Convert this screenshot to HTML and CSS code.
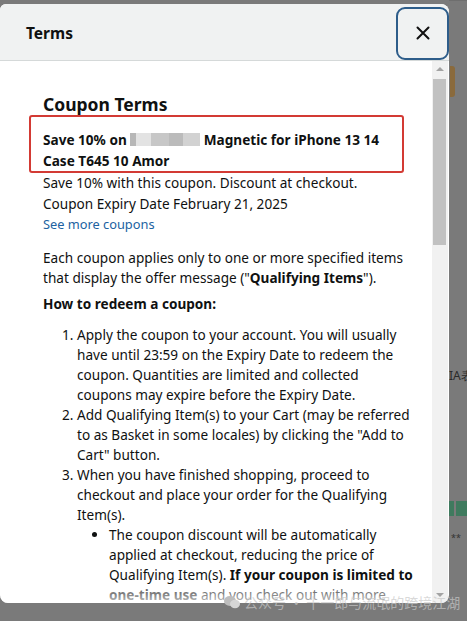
FILE: index.html
```html
<!DOCTYPE html>
<html lang="en">
<head>
    <meta charset="UTF-8">
    <meta name="viewport" content="width=device-width, initial-scale=1.0">
    <title>Terms</title>
    <link rel="stylesheet" href="styles.css">
</head>
<body>
    <div class="backdrop">
        <div class="page-bits">
            <div class="bit-orange"></div>
            <div class="bit-text">IA表</div>
            <div class="bit-stars">**</div>
            <div class="bit-green"></div>
        </div>

        <div class="modal">
            <div class="modal-header">
                <h1>Terms</h1>
                <button class="close-btn" aria-label="Close">
                    <svg width="14" height="14" viewBox="0 0 14 14">
                        <path d="M1.5 1.5 L12.5 12.5 M12.5 1.5 L1.5 12.5" stroke="#111" stroke-width="2" stroke-linecap="round"/>
                    </svg>
                </button>
            </div>

            <div class="modal-body">
                <div class="content">
                    <h2>Coupon Terms</h2>
                    <div class="highlight">
                        <p class="coupon-title">Save 10% on <span class="blur"></span> Magnetic for iPhone 13 14 Case T645 10 Amor</p>
                    </div>
                    <div class="summary">
                        <p>Save 10% with this coupon. Discount at checkout.</p>
                        <p>Coupon Expiry Date February 21, 2025</p>
                        <a href="#" class="more-link">See more coupons</a>
                    </div>

                    <p class="para">Each coupon applies only to one or more specified items that display the offer message ("<b>Qualifying Items</b>").</p>
                    <p class="para"><b>How to redeem a coupon:</b></p>

                    <ol>
                        <li>Apply the coupon to your account. You will usually have until 23:59 on the Expiry Date to redeem the coupon. Quantities are limited and collected coupons may expire before the Expiry Date.</li>
                        <li>Add Qualifying Item(s) to your Cart (may be referred to as Basket in some locales) by clicking the "Add to Cart" button.</li>
                        <li>When you have finished shopping, proceed to checkout and place your order for the Qualifying Item(s).
                            <ul>
                                <li>The coupon discount will be automatically applied at checkout, reducing the price of Qualifying Item(s). <b>If your coupon is limited to one-time use</b> and you check out with more than one Qualifying Item, the discount applies once.</li>
                            </ul>
                        </li>
                    </ol>
                    <div class="fade"></div>
                </div>
                <div class="scrollbar">
                    <div class="arrow-up"></div>
                    <div class="thumb"></div>
                    <div class="arrow-down"></div>
                </div>
            </div>
        </div>

        <div class="watermark">
            <svg width="16" height="14" viewBox="0 0 16 14">
                <ellipse cx="6" cy="6" rx="6" ry="5" fill="#bdbdbd"/>
                <ellipse cx="11" cy="9" rx="5" ry="4.2" fill="#d6d6d6"/>
            </svg>
            <span>公众号 · 十一郎与流氓的跨境江湖</span>
        </div>
    </div>
</body>
</html>
```

FILE: styles.css
```css
* {
    margin: 0;
    padding: 0;
    box-sizing: border-box;
}

body {
    width: 467px;
    height: 621px;
    overflow: hidden;
    background: #7a7a7a;
    font-family: "Noto Sans", Arial, sans-serif;
    color: #0f1111;
}

/* Dimmed page behind the popup */
.backdrop {
    position: relative;
    width: 467px;
    height: 621px;
    padding-top: 4px;
}

.page-bits {
    position: absolute;
    left: 449px;
    top: 0;
    width: 18px;
    height: 621px;
    border-top: 1px solid #6e6e6e;
    overflow: hidden;
}

.bit-orange {
    position: absolute;
    top: 65px;
    left: 1px;
    width: 5px;
    height: 31px;
    background: #8a6a3c;
    border-radius: 0 3px 3px 0;
}

.bit-text {
    position: absolute;
    top: 366px;
    left: 0;
    font-size: 12px;
    color: #2a2a2a;
    white-space: nowrap;
}

.bit-stars {
    position: absolute;
    top: 530px;
    left: 2px;
    font-size: 9px;
    color: #333;
}

.bit-green {
    position: absolute;
    top: 500px;
    left: 0;
    width: 18px;
    height: 15px;
    background: linear-gradient(90deg, #3f7a5e 0 5px, #7a7a7a 5px 7px, #3f7a5e 7px);
}

/* Popup */
.modal {
    width: 449px;
    height: 599px;
    background: #fff;
    border-radius: 6px 8px 8px 8px;
    overflow: hidden;
    display: flex;
    flex-direction: column;
    position: relative;
}

.modal-header {
    height: 57px;
    background: #f0f2f2;
    border-bottom: 1px solid #d5d9d9;
    display: flex;
    align-items: center;
    justify-content: space-between;
    padding-left: 26px;
    flex-shrink: 0;
}

.modal-header h1 {
    font-size: 15.5px;
    font-weight: 700;
    margin-top: 1px;
}

.close-btn {
    width: 53px;
    height: 53px;
    border: 2px solid #2d5d8a;
    border-radius: 9px;
    background: #f0f2f2;
    display: flex;
    align-items: center;
    justify-content: center;
    margin-top: 2px;
}

.modal-body {
    flex: 1;
    display: flex;
    overflow: hidden;
}

.content {
    flex: 1;
    padding: 32px 18px 0 43px;
    font-size: 13.6px;
    line-height: 20px;
    overflow: hidden;
    position: relative;
}

.content h2 {
    font-size: 17.5px;
    font-weight: 700;
    line-height: 22px;
}

.highlight {
    margin: 0 10px 0 -14px;
    border: 2px solid #d33a34;
    border-radius: 3px;
    padding: 12px 0 0 12px;
}

.coupon-title {
    font-weight: 700;
    line-height: 21px;
}

.blur {
    display: inline-block;
    width: 70px;
    height: 13px;
    vertical-align: -1px;
    background: linear-gradient(90deg, #b7b7b7 0 8%, #e3e3e3 8% 30%, #c7c7c7 30% 55%, #bbb 55% 75%, #d2d2d2 75% 100%);
}

.summary {
    margin-top: -1px;
    line-height: 21px;
}

.more-link {
    display: block;
    font-size: 12.8px;
    color: #2162a1;
    text-decoration: none;
}

.para {
    margin-top: 13px;
}

.para + .para {
    margin-top: 6px;
}

ol {
    margin-top: 11px;
    padding-left: 34px;
}

ul {
    padding-left: 32px;
    list-style: disc;
}

/* Bottom of the scroll area fades out */
.fade {
    position: absolute;
    left: 0;
    right: 0;
    bottom: 0;
    height: 18px;
    background: linear-gradient(rgba(255, 255, 255, 0.2), rgba(255, 255, 255, 0.75));
}

.scrollbar {
    width: 16px;
    background: #f1f1f1;
    position: relative;
    margin-right: 1px;
}

.thumb {
    position: absolute;
    top: 18px;
    left: 1px;
    width: 13px;
    height: 166px;
    background: #c1c1c1;
}

.arrow-up {
    position: absolute;
    top: 6px;
    left: 4px;
    border-left: 4px solid transparent;
    border-right: 4px solid transparent;
    border-bottom: 4px solid #a3a3a3;
}

.arrow-down {
    position: absolute;
    bottom: 6px;
    left: 4px;
    border-left: 4px solid transparent;
    border-right: 4px solid transparent;
    border-top: 4px solid #a3a3a3;
}

/* Watermark laid over the screenshot */
.watermark {
    position: absolute;
    left: 224px;
    top: 592px;
    display: flex;
    align-items: center;
    gap: 4px;
    font-family: "Noto Sans CJK SC", sans-serif;
    font-size: 14px;
    white-space: nowrap;
    color: rgba(200, 200, 200, 0.7);
}
```
